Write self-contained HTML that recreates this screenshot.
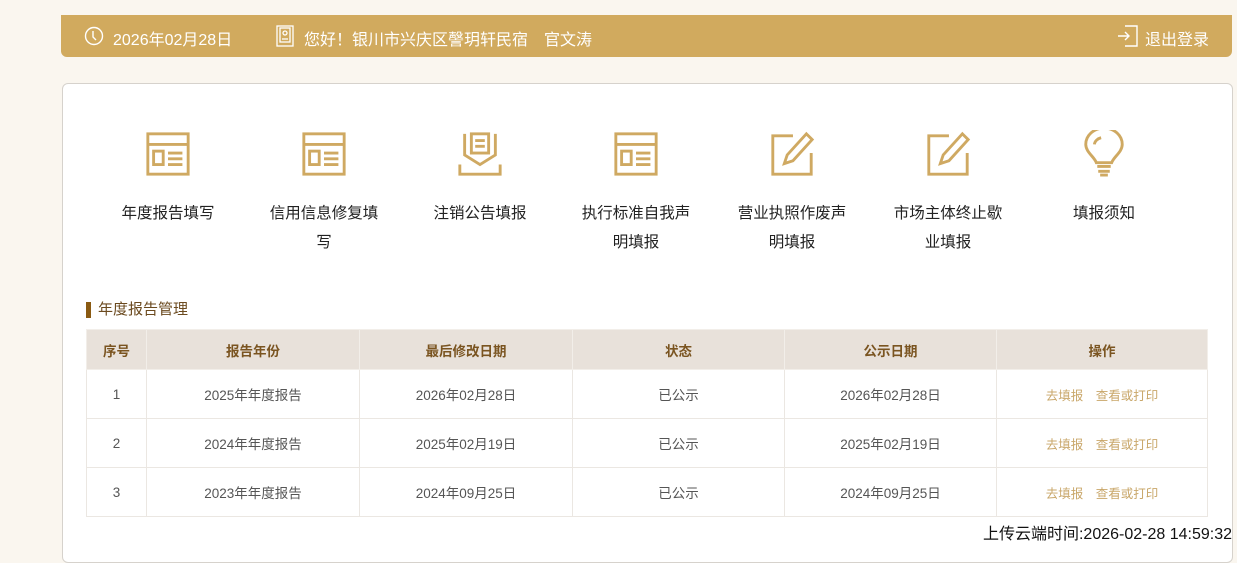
<!DOCTYPE html>
<html><head><meta charset="utf-8"><style>
*{margin:0;padding:0;box-sizing:border-box}
body{width:1237px;height:544px;overflow:hidden;background:#faf6ef;font-family:"Liberation Sans","Noto Sans CJK SC",sans-serif;position:relative}
.bar{position:absolute;left:61px;top:15px;width:1171px;height:42px;background:#d1aa5e;border-radius:0 0 6px 6px;color:#fff;font-size:16px}
.bar span,.bar svg{position:absolute}
.card{position:absolute;left:62px;top:83px;width:1171px;height:480px;background:#fff;border:1px solid #d6d2cc;border-radius:6px}
.ic{position:absolute;top:46px;width:130px;text-align:center}
.ic svg{display:block;margin:0 auto;width:48px;height:48px}
.ic div{margin-top:21px;font-size:15.5px;line-height:29px;color:#222;padding:0 6px}
.ttl{position:absolute;left:23px;top:216px;font-size:15px;color:#6b4a1f;padding-left:12px;line-height:20px}
.ttl:before{content:"";position:absolute;left:0;top:2px;width:5px;height:16px;background:#8a5a12}
table{position:absolute;left:23px;top:245px;border-collapse:collapse;font-size:13.5px;color:#555;text-align:center}
td,th{border:1px solid #ebe7e2;height:49px}
th{background:#e8e1da;color:#7a5420;height:40px;font-weight:bold;border-color:#f2eee9}
.a{color:#c9a76a;font-size:12.5px}
.ft{position:absolute;right:5px;top:520px;font-size:16px;color:#111}
</style></head><body>
<div class="bar">
<svg style="left:23px;top:11px" width="20" height="20" viewBox="0 0 20 20" fill="none" stroke="#fff" stroke-width="1.4"><circle cx="10" cy="10" r="8.5"/><path d="M9 5v6l3 3"/></svg>
<span style="left:52px;top:11px">2026年02月28日</span>
<svg style="left:215px;top:10px" width="18" height="22" viewBox="0 0 18 22" fill="none" stroke="#fff" stroke-width="1.3"><rect x="1" y="1" width="16" height="20"/><rect x="4" y="3" width="10" height="14"/><circle cx="9" cy="8" r="2"/><path d="M6 14h6"/></svg>
<span style="left:243px;top:11px">您好！银川市兴庆区謦玥轩民宿　官文涛</span>
<svg style="left:1056px;top:10px" width="22" height="22" viewBox="0 0 22 22" fill="none" stroke="#fff" stroke-width="1.4"><path d="M8 1h12v20H8"/><path d="M1 11h11M8 7l4 4-4 4"/></svg>
<span style="left:1084px;top:11px">退出登录</span>
</div>
<div class="card">
<div class="ic" style="left:40px"><svg viewBox="0 0 50 50" fill="none" stroke="#cfa962" stroke-width="3"><rect x="4" y="4" width="42" height="42"/><path d="M4 15h42"/><rect x="10" y="22" width="10" height="14"/><path d="M25 24h15M25 30h15M25 36h15"/></svg><div>年度报告填写</div></div>
<div class="ic" style="left:196px"><svg viewBox="0 0 50 50" fill="none" stroke="#cfa962" stroke-width="3"><rect x="4" y="4" width="42" height="42"/><path d="M4 15h42"/><rect x="10" y="22" width="10" height="14"/><path d="M25 24h15M25 30h15M25 36h15"/></svg><div>信用信息修复填写</div></div>
<div class="ic" style="left:352px"><svg viewBox="0 0 50 50" fill="none" stroke="#cfa962" stroke-width="3"><path d="M4 36v10h42V36"/><path d="M9 4v22l16 10 16-10V4"/><rect x="16" y="4" width="18" height="20"/><path d="M20 11h10M20 17h10"/></svg><div>注销公告填报</div></div>
<div class="ic" style="left:508px"><svg viewBox="0 0 50 50" fill="none" stroke="#cfa962" stroke-width="3"><rect x="4" y="4" width="42" height="42"/><path d="M4 15h42"/><rect x="10" y="22" width="10" height="14"/><path d="M25 24h15M25 30h15M25 36h15"/></svg><div>执行标准自我声明填报</div></div>
<div class="ic" style="left:664px"><svg viewBox="0 0 50 50" fill="none" stroke="#cfa962" stroke-width="3"><path d="M26 6H5v40h40V24"/><path d="M40 4l6 6-20 22-9 3 3-9z"/></svg><div>营业执照作废声明填报</div></div>
<div class="ic" style="left:820px"><svg viewBox="0 0 50 50" fill="none" stroke="#cfa962" stroke-width="3"><path d="M26 6H5v40h40V24"/><path d="M40 4l6 6-20 22-9 3 3-9z"/></svg><div>市场主体终止歇业填报</div></div>
<div class="ic" style="left:976px"><svg viewBox="0 0 50 50" fill="none" stroke="#cfa962" stroke-width="3"><path d="M17 34c-2-6-11-11-11-19a19 17 0 0 1 38 0c0 8-9 13-11 19z"/><path d="M18 38h14M19 43h12M21 47h8"/><path d="M15 15a10 8 0 0 1 7-7"/></svg><div>填报须知</div></div>
<div class="ttl">年度报告管理</div>
<table>
<tr><th style="width:60px">序号</th><th style="width:213px">报告年份</th><th style="width:213px">最后修改日期</th><th style="width:212px">状态</th><th style="width:212px">公示日期</th><th style="width:211px">操作</th></tr>
<tr><td>1</td><td>2025年年度报告</td><td>2026年02月28日</td><td>已公示</td><td>2026年02月28日</td><td class="a">去填报　查看或打印</td></tr>
<tr><td>2</td><td>2024年年度报告</td><td>2025年02月19日</td><td>已公示</td><td>2025年02月19日</td><td class="a">去填报　查看或打印</td></tr>
<tr><td>3</td><td>2023年年度报告</td><td>2024年09月25日</td><td>已公示</td><td>2024年09月25日</td><td class="a">去填报　查看或打印</td></tr>
</table>
</div>
<div class="ft">上传云端时间:2026-02-28 14:59:32</div>
</body></html>
